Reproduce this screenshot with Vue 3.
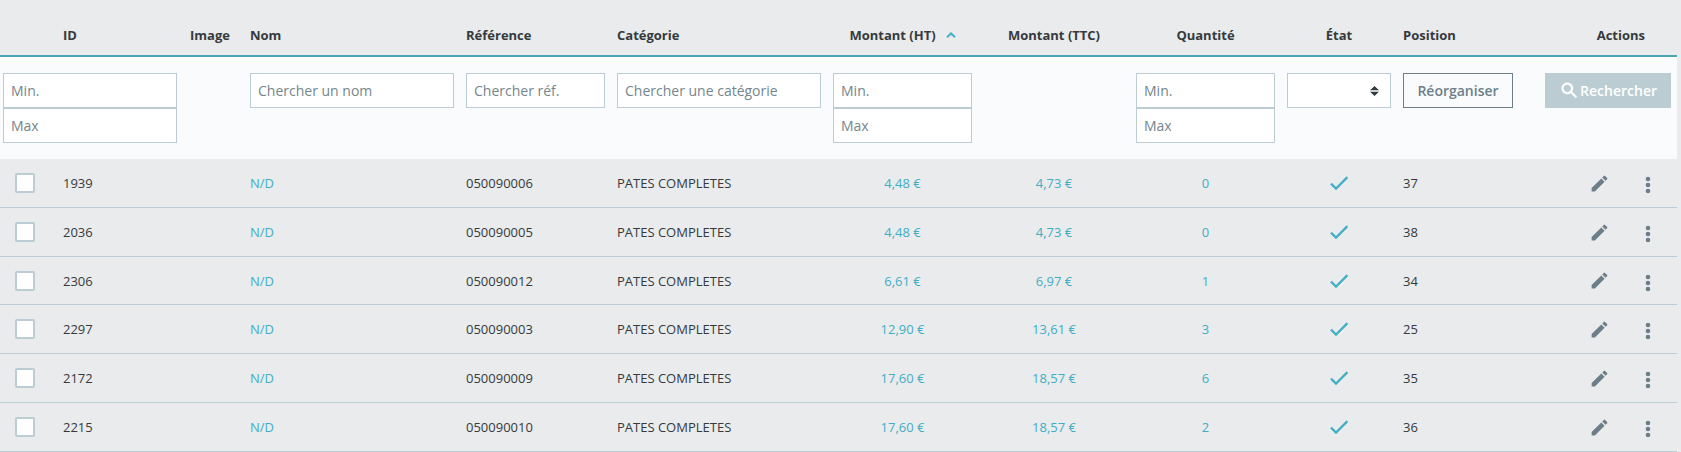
<script setup>
import { reactive } from 'vue'

const rows = reactive([
  { id: 1939, ref: '050090006', ht: '4,48 €', ttc: '4,73 €', qty: 0, pos: 37, checked: false },
  { id: 2036, ref: '050090005', ht: '4,48 €', ttc: '4,73 €', qty: 0, pos: 38, checked: false },
  { id: 2306, ref: '050090012', ht: '6,61 €', ttc: '6,97 €', qty: 1, pos: 34, checked: false },
  { id: 2297, ref: '050090003', ht: '12,90 €', ttc: '13,61 €', qty: 3, pos: 25, checked: false },
  { id: 2172, ref: '050090009', ht: '17,60 €', ttc: '18,57 €', qty: 6, pos: 35, checked: false },
  { id: 2215, ref: '050090010', ht: '17,60 €', ttc: '18,57 €', qty: 2, pos: 36, checked: false },
])
</script>

<template>
  <main class="catalog">
    <table class="grid">
      <colgroup>
        <col class="c-check" /><col class="c-id" /><col class="c-image" /><col />
        <col class="c-mid" /><col /><col class="c-mid" /><col class="c-ttc" />
        <col class="c-mid" /><col class="c-state" /><col class="c-pos" /><col class="c-actions" />
      </colgroup>
      <thead>
        <tr class="heads">
          <td></td>
          <th scope="col">ID</th>
          <th scope="col">Image</th>
          <th scope="col">Nom</th>
          <th scope="col">Référence</th>
          <th scope="col">Catégorie</th>
          <th scope="col" class="center" aria-sort="ascending">
            <span class="sorted">Montant (HT)
              <svg width="10" height="6" viewBox="0 0 10 6" aria-hidden="true"><path d="M1 5.2 5 1.4 9 5.2" fill="none" stroke="currentColor" stroke-width="2.1" /></svg>
            </span>
          </th>
          <th scope="col" class="center">Montant (TTC)</th>
          <th scope="col" class="center">Quantité</th>
          <th scope="col" class="center">État</th>
          <th scope="col">Position</th>
          <th scope="col" class="last">Actions</th>
        </tr>
        <tr class="filters">
          <td colspan="2" class="first">
            <input type="text" placeholder="Min." aria-label="ID minimum" />
            <input type="text" placeholder="Max" aria-label="ID maximum" />
          </td>
          <td></td>
          <td><input type="text" placeholder="Chercher un nom" aria-label="Nom" /></td>
          <td><input type="text" placeholder="Chercher réf." aria-label="Référence" /></td>
          <td><input type="text" placeholder="Chercher une catégorie" aria-label="Catégorie" /></td>
          <td>
            <input type="text" placeholder="Min." aria-label="Montant minimum" />
            <input type="text" placeholder="Max" aria-label="Montant maximum" />
          </td>
          <td></td>
          <td>
            <input type="text" placeholder="Min." aria-label="Quantité minimum" />
            <input type="text" placeholder="Max" aria-label="Quantité maximum" />
          </td>
          <td>
            <div class="select">
              <select aria-label="État"><option value=""></option></select>
              <svg width="9" height="10" viewBox="0 0 9 10" aria-hidden="true"><path d="M0 4.2 4.5 0 9 4.2zM0 5.8h9L4.5 10z" fill="#363a41" /></svg>
            </div>
          </td>
          <td><button type="button" class="outline">Réorganiser</button></td>
          <td class="right">
            <button type="submit" class="search">
              <svg width="21" height="21" viewBox="0 0 24 24" aria-hidden="true"><path fill="currentColor" stroke="currentColor" stroke-width=".5" d="M15.5 14h-.79l-.28-.27A6.47 6.47 0 0 0 16 9.5 6.5 6.5 0 1 0 9.5 16c1.61 0 3.09-.59 4.23-1.57l.27.28v.79l5 4.99L20.49 19zm-6 0C7.01 14 5 11.99 5 9.5S7.01 5 9.5 5 14 7.01 14 9.5 11.99 14 9.5 14z" /></svg>Rechercher
            </button>
          </td>
        </tr>
      </thead>
      <tbody>
        <tr v-for="row in rows" :key="row.id">
          <td class="pick"><input v-model="row.checked" type="checkbox" :aria-label="'Produit ' + row.id" /></td>
          <td>{{ row.id }}</td>
          <td></td>
          <td><a href="#">N/D</a></td>
          <td>{{ row.ref }}</td>
          <td>PATES COMPLETES</td>
          <td class="center"><a href="#">{{ row.ht }}</a></td>
          <td class="center"><a href="#">{{ row.ttc }}</a></td>
          <td class="center"><a href="#">{{ row.qty }}</a></td>
          <td class="center">
            <button type="button" class="icon state" aria-label="Activé">
              <svg width="24" height="24" viewBox="0 0 24 24" aria-hidden="true"><path fill="currentColor" stroke="currentColor" stroke-width=".4" d="M9 16.17 4.83 12l-1.42 1.41L9 19 21 7l-1.41-1.41z" /></svg>
            </button>
          </td>
          <td>{{ row.pos }}</td>
          <td>
            <div class="actions">
              <button type="button" class="icon" aria-label="Modifier">
                <svg width="21" height="21" viewBox="0 0 24 24" aria-hidden="true"><path fill="currentColor" d="M3 17.25V21h3.75L17.81 9.94l-3.75-3.75zM20.71 7.04a1 1 0 0 0 0-1.41l-2.34-2.34a1 1 0 0 0-1.41 0l-1.83 1.83 3.75 3.75z" /></svg>
              </button>
              <button type="button" class="icon more" aria-label="Plus d'actions">
                <svg width="24" height="24" viewBox="0 0 24 24" aria-hidden="true"><g fill="currentColor"><circle cx="12" cy="6" r="2.3" /><circle cx="12" cy="12" r="2.3" /><circle cx="12" cy="18" r="2.3" /></g></svg>
              </button>
            </div>
          </td>
        </tr>
      </tbody>
    </table>
  </main>
</template>

<style>
body {
  margin: 0;
  background: #e9ebec;
}
</style>

<style scoped>
.catalog {
  padding-right: 4px;
  color: #363a3d;
  font: 13px/20px "Open Sans", "Noto Sans", sans-serif;
}
.grid {
  width: 100%;
  table-layout: fixed;
  border-collapse: separate;
  border-spacing: 0;
}
.c-check { width: 57px; }
.c-id { width: 127px; }
.c-image { width: 60px; }
.c-mid { width: 151px; }
.c-ttc { width: 152px; }
.c-state { width: 116px; }
.c-pos { width: 122px; }
.c-actions { width: 158px; }

th,
td {
  box-sizing: border-box;
  padding: 0 6px;
  text-align: left;
  vertical-align: middle;
}
.center { text-align: center; }
.right { text-align: right; }

.heads th,
.heads td {
  padding-top: 25px;
  padding-bottom: 10px;
  border-bottom: 2px solid #4aa5b6;
  font-weight: 700;
  white-space: nowrap;
}
.heads .last {
  padding-right: 32px;
  text-align: right;
}
.sorted {
  display: inline-flex;
  align-items: center;
  gap: 10px;
}
.sorted svg { color: #4ab2c8; }

.filters td {
  padding-top: 16px;
  padding-bottom: 16px;
  background: #fafbfc;
  vertical-align: top;
}
.filters .first {
  padding-left: 3px;
  padding-right: 7px;
}
.filters input,
.filters select {
  display: block;
  box-sizing: border-box;
  width: 100%;
  height: 35px;
  padding: 0 7px;
  border: 1px solid #bbcdd2;
  border-radius: 0;
  background: #fff;
  color: #363a3d;
  font: inherit;
  font-size: 14px;
  appearance: none;
}
.filters input::placeholder {
  color: #75868c;
  opacity: 1;
}
.select { position: relative; }
.select svg {
  position: absolute;
  top: 13px;
  right: 12px;
  pointer-events: none;
}
.outline,
.search {
  box-sizing: border-box;
  height: 35px;
  border: 1px solid #6c7f88;
  background: transparent;
  color: #6c7f88;
  font: inherit;
  font-size: 14px;
  font-weight: 600;
  white-space: nowrap;
}
.outline {
  width: 100%;
  padding: 0;
}
.search {
  display: inline-flex;
  align-items: center;
  padding: 0 13px;
  border-color: #bbcdd2;
  background: #bbcdd2;
  color: #fff;
}

tbody td {
  height: 49px;
  border-bottom: 1px solid #bbcdd2;
}
tbody tr:nth-child(5n + 3) td { height: 48px; }
a {
  color: #42aec4;
  text-decoration: none;
}
.pick { padding-left: 15px; }
.pick input {
  display: block;
  box-sizing: border-box;
  width: 20px;
  height: 20px;
  margin: 0;
  border: 2px solid #bbcdd2;
  border-radius: 2px;
  background: #fff;
  appearance: none;
}
.pick input:checked { background: #42aec4; }
.icon {
  display: block;
  padding: 0;
  border: 0;
  background: none;
  color: #6c7f88;
}
.icon svg { display: block; }
.state {
  margin: 0 auto;
  color: #42aec4;
}
.actions {
  display: flex;
  align-items: center;
  justify-content: flex-end;
  gap: 26px;
  padding-right: 11px;
}
.more { padding-top: 4px; }
</style>
